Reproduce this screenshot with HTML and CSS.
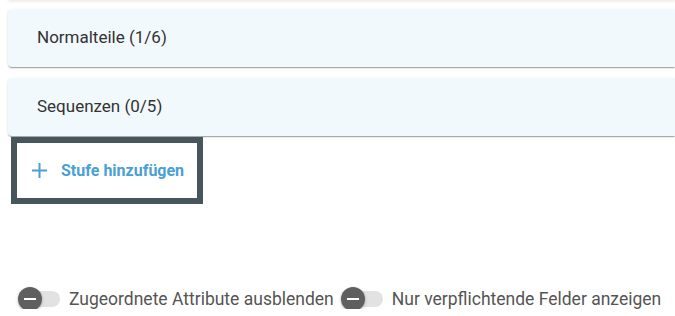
FILE: index.html
```html
<!DOCTYPE html>
<html lang="de">
<head>
  <meta charset="UTF-8" />
  <title>Stufen</title>
  <link rel="stylesheet" href="styles.css">
</head>
<body>
  <div class="page">
    <div class="panel-tail"></div>

    <div class="panel">
      <span class="panel-title">Normalteile (1/6)</span>
    </div>
    <div class="panel">
      <span class="panel-title">Sequenzen (0/5)</span>
    </div>

    <button class="add-btn">
      <svg class="plus" width="15" height="15" viewBox="0 0 15 15">
        <path d="M7.5 0 V15 M0 7.5 H15" stroke="currentColor" stroke-width="2" fill="none"/>
      </svg>
      Stufe hinzufügen
    </button>

    <div class="toggles">
      <label class="toggle">
        <span class="toggle-bar"><span class="toggle-thumb"></span></span>
        Zugeordnete Attribute ausblenden
      </label>
      <label class="toggle">
        <span class="toggle-bar"><span class="toggle-thumb"></span></span>
        Nur verpflichtende Felder anzeigen
      </label>
    </div>
  </div>
</body>
</html>
```

FILE: styles.css
```css
body {
  margin: 0;
  font-family: Roboto, "Liberation Sans", sans-serif;
  background: #fff;
  color: #333;
}
.page {
  padding-left: 8px;
}
.panel-tail {
  height: 1px;
  margin-top: -1px;
  box-shadow: 0 1px 3px rgba(0, 0, 0, 0.2);
}
.panel {
  display: flex;
  align-items: center;
  height: 58px;
  margin-top: 9px;
  padding-left: 29px;
  padding-bottom: 2px;
  box-sizing: border-box;
  background: #f2f9fd;
  border-radius: 4px 0 0 4px;
  box-shadow: 0 2px 1px -1px rgba(0, 0, 0, 0.2), 0 1px 1px 0 rgba(0, 0, 0, 0.14), 0 1px 3px 0 rgba(0, 0, 0, 0.12);
}
.panel + .panel {
  margin-top: 11px;
}
.panel-title {
  font-size: 17px;
  color: #333;
}
.add-btn {
  display: flex;
  align-items: center;
  gap: 14px;
  margin: 1px 0 0 3px;
  width: 192px;
  height: 67px;
  padding: 0 0 0 15px;
  background: #fff;
  border: 6px solid #47565b;
  color: #4a9fd4;
  font-family: Roboto, "Liberation Sans", sans-serif;
  font-size: 16px;
  font-weight: 700;
  cursor: pointer;
}
.plus {
  flex: none;
}
.toggles {
  display: flex;
  align-items: center;
  gap: 7px;
  margin-top: 85px;
  padding-left: 10px;
}
.toggle {
  display: flex;
  align-items: center;
  gap: 9px;
  font-size: 17.5px;
  color: #555;
}
.toggle-bar {
  position: relative;
  width: 40px;
  height: 16px;
  margin-left: 2px;
  border-radius: 8px;
  background: #e2e2e2;
}
.toggle-thumb {
  position: absolute;
  left: -2px;
  top: -4px;
  width: 24px;
  height: 24px;
  border-radius: 50%;
  background: #5f5f5f;
  box-shadow: 0 1px 3px rgba(0, 0, 0, 0.3);
}
.toggle-thumb::after {
  content: "";
  position: absolute;
  left: 6px;
  top: 11px;
  width: 12px;
  height: 2px;
  background: #fff;
}
```
